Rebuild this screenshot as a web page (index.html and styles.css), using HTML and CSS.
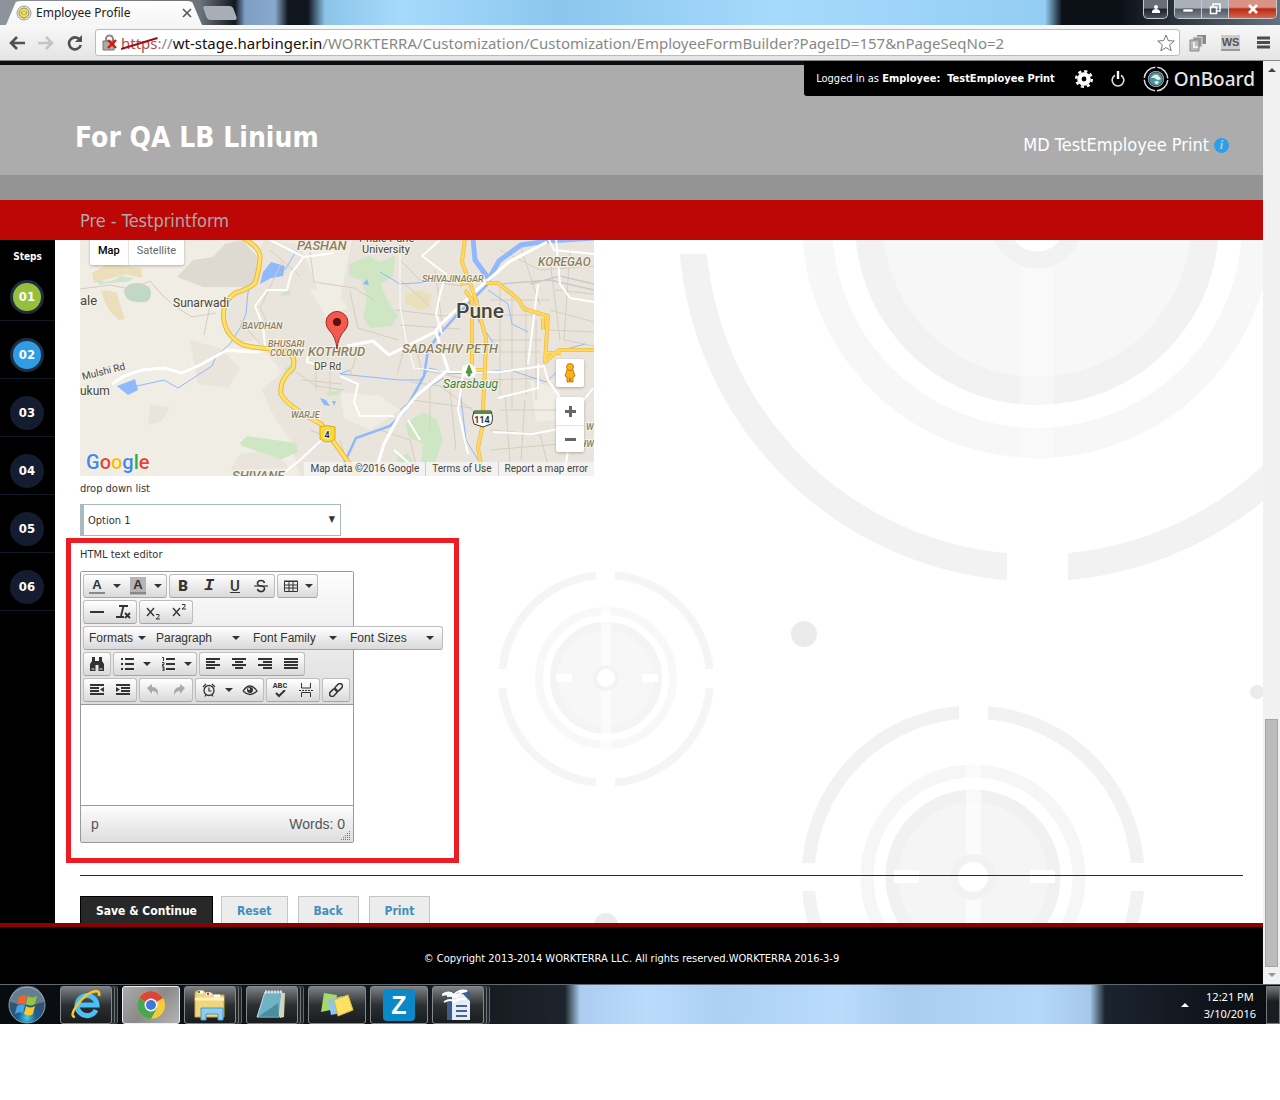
FILE: index.html
```html
<!DOCTYPE html>
<html lang="en">

<head>
	<meta charset="UTF-8" />
	<title>Employee Profile</title>
	<link rel="stylesheet" href="styles.css">
</head>

<body>
	<!-- Window title bar -->
	<div class="titlebar">
		<div class="tab">
			<svg width="16" height="16" viewBox="0 0 16 16"><circle cx="8" cy="8" r="7" fill="#eee" stroke="#999"/><circle cx="8" cy="8" r="5" fill="#f3e21c" stroke="#888"/><path d="M5 8q3-3 6 0q-3 3-6 0" fill="#fff" stroke="#a98"/></svg>
			<span class="tab-title">Employee Profile</span>
			<button class="tab-close" aria-label="Close tab"><svg width="10" height="10" viewBox="0 0 10 10"><path d="M1 1l8 8M9 1l-8 8" stroke="#555" stroke-width="1.6"/></svg></button>
		</div>
		<button class="new-tab" aria-label="New tab"></button>
		<div class="window-buttons">
			<button class="win user" aria-label="User"><svg width="10" height="10" viewBox="0 0 10 10"><circle cx="5" cy="3" r="2" fill="#fff"/><path d="M1 9V7q1-2 4-2t4 2v2z" fill="#fff"/></svg></button>
			<div class="win-group">
				<button class="win" aria-label="Minimize"><svg width="12" height="12" viewBox="0 0 12 12"><path d="M1 6h10v3H1z" fill="#fff" stroke="#555" stroke-width=".6"/></svg></button>
				<button class="win" aria-label="Restore"><svg width="12" height="12" viewBox="0 0 12 12"><path d="M4 4V1h7v7H8M1.500 4h6v6.500h-6z" fill="none" stroke="#fff" stroke-width="1.500"/></svg></button>
				<button class="win close" aria-label="Close"><svg width="12" height="12" viewBox="0 0 12 12"><path d="M2 2l8 8M10 2l-8 8" stroke="#fff" stroke-width="2.600"/></svg></button>
			</div>
		</div>
	</div>

	<!-- Browser toolbar -->
	<div class="browser-bar">
		<button class="nav" aria-label="Back"><svg width="18" height="16" viewBox="0 0 18 16"><path d="M17 8H3M9 2L3 8l6 6" fill="none" stroke="#505050" stroke-width="2.600"/></svg></button>
		<button class="nav" aria-label="Forward"><svg width="18" height="16" viewBox="0 0 18 16"><path d="M1 8h14M9 2l6 6-6 6" fill="none" stroke="#c4c4c4" stroke-width="2.600"/></svg></button>
		<button class="nav" aria-label="Reload"><svg width="16" height="16" viewBox="0 0 16 16"><path d="M13 5a6 6 0 1 0 .8 5" fill="none" stroke="#505050" stroke-width="2.600"/><path d="M15 0v7H8z" fill="#505050"/></svg></button>
		<div class="address">
			<svg width="16" height="18" viewBox="0 0 16 18"><path d="M4 8V5a3.500 3.500 0 0 1 7 0v3" fill="none" stroke="#888" stroke-width="2"/><path d="M1 7h11v9H1z" fill="#aaa" stroke="#777"/><path d="M6 6l8 8M14 6l-8 8" stroke="#d9160c" stroke-width="2.400"/></svg>
			<div class="url" role="textbox" aria-label="Address"><span class="scheme">https<svg viewBox="0 0 36 14" preserveAspectRatio="none"><path d="M0 12L36 1" stroke="#a30d0d" stroke-width="2"/></svg></span>://<span class="host">wt-stage.harbinger.in</span>/WORKTERRA/Customization/Customization/EmployeeFormBuilder?PageID=157&amp;nPageSeqNo=2</div>
			<svg width="18" height="18" viewBox="0 0 18 18"><path d="M9 1l2.300 5.600 6 .4-4.700 3.800 1.600 6L9 13.500l-5.200 3.300 1.600-6L.7 7l6-.4z" fill="#fff" stroke="#777"/></svg>
		</div>
		<button class="ext" aria-label="Copy pages"><svg width="18" height="18" viewBox="0 0 18 18"><path d="M8 1h9v9H8z" fill="#888"/><path d="M4 3h9v10H4z" fill="#999" stroke="#ddd"/><path d="M1 6h9v11H1z" fill="#bbb" stroke="#888"/><path d="M5 8v5h4" fill="none" stroke="#eee" stroke-width="2"/></svg></button>
		<button class="ext ws">WS</button>
		<button class="ext" aria-label="Menu"><svg width="13" height="13" viewBox="0 0 13 13"><path d="M0 2h13M0 6.500h13M0 11h13" stroke="#4c4c4c" stroke-width="3"/></svg></button>
	</div>

	<div class="viewport">
		<div class="page">
			<header class="header">
				<div class="user-bar">
					<span class="logged">Logged in as <b>Employee:&nbsp; TestEmployee Print</b></span>
					<button aria-label="Settings"><svg width="18" height="18" viewBox="0 0 18 18"><circle cx="9" cy="9" r="4.600" fill="none" stroke="#fff" stroke-width="4.400"/><circle cx="9" cy="9" r="7.800" fill="none" stroke="#fff" stroke-width="2.400" stroke-dasharray="3.100 3.026"/></svg></button>
					<button aria-label="Log out"><svg width="14" height="16" viewBox="0 0 14 16"><path d="M4 4.200a5.800 5.800 0 1 0 6 0" fill="none" stroke="#ddd" stroke-width="1.600"/><path d="M7 0v8" stroke="#fff" stroke-width="2.400"/></svg></button>
					<a href="#" class="brand">
						<svg width="26" height="26" viewBox="0 0 26 26"><circle cx="13" cy="13" r="11.800" fill="none" stroke="#ddd" stroke-width="1.500" stroke-dasharray="16.500 2.035" stroke-dashoffset="-1"/><circle cx="13" cy="13" r="8" fill="#ddd"/><circle cx="13" cy="13" r="7" fill="#4d91a8" stroke="#345"/><path d="M8 12q3-5 7-3l3 4q-3 2-5 0t-5-1M11 16q3-2 5 0l-2 3z" fill="#e5f1cf"/></svg>
						<span>OnBoard</span>
					</a>
				</div>
				<div class="title-row">
					<h1>For QA LB Linium</h1>
					<div class="person">MD TestEmployee Print <span class="info">i</span></div>
				</div>
			</header>
			<h2 class="form-title">Pre - Testprintform</h2>

			<div class="columns">
				<nav class="steps">
					<span class="steps-title">Steps</span>
					<a href="#" class="step done"><span>01</span></a>
					<a href="#" class="step current"><span>02</span></a>
					<a href="#" class="step"><span>03</span></a>
					<a href="#" class="step"><span>04</span></a>
					<a href="#" class="step"><span>05</span></a>
					<a href="#" class="step"><span>06</span></a>
				</nav>

				<main class="main">
					<svg class="backdrop" viewBox="55 240 1208 683" preserveAspectRatio="xMaxYMin slice">
						<!-- large target -->
						<circle cx="1037" cy="223" r="345" fill="none" stroke="#f2f2f2" stroke-width="27"/>
						<path d="M1007 540h61v50h-61zM670 220h60v34h-60z" fill="#fff"/>
						<circle cx="1037" cy="223" r="220" fill="none" stroke="#f7f7f7" stroke-width="30"/>
						<circle cx="1037" cy="223" r="182" fill="#f2f2f2"/>
						<circle cx="1037" cy="223" r="154" fill="#f7f7f7"/>
						<path d="M1020 240h34v217h-34z" fill="#fff" opacity=".3"/>
						<circle cx="1037" cy="223" r="37" fill="#fff" stroke="#f2f2f2" stroke-width="17"/>
						<!-- small target -->
						<circle cx="606" cy="679" r="104" fill="none" stroke="#f5f5f5" stroke-width="8"/>
						<path d="M596 565h19v20h-19zM596 773h19v20h-19zM495 669h20v19h-20zM697 669h20v19h-20z" fill="#fff"/>
						<circle cx="606" cy="678" r="67" fill="none" stroke="#f8f8f8" stroke-width="8"/>
						<circle cx="606" cy="678" r="52" fill="#f7f7f7" stroke="#f4f4f4" stroke-width="8"/>
						<path d="M601 607h10v142h-10z" fill="#fff" opacity=".5"/>
						<path d="M556 674h16v8h-16zM642 674h16v8h-16z" fill="#fff"/>
						<circle cx="606" cy="678" r="11" fill="#fff" stroke="#f3f3f3" stroke-width="4"/>
						<!-- medium target -->
						<circle cx="973" cy="877" r="165" fill="none" stroke="#f2f2f2" stroke-width="13"/>
						<path d="M959 700h29v30h-29zM795 863h30v28h-30zM1122 863h30v28h-30z" fill="#fff"/>
						<circle cx="973" cy="877" r="106" fill="none" stroke="#f6f6f6" stroke-width="13"/>
						<circle cx="973" cy="877" r="81" fill="#f5f5f5" stroke="#f1f1f1" stroke-width="13"/>
						<path d="M966 764h15v160h-15z" fill="#fff" opacity=".55"/>
						<path d="M894 870h25v13h-25zM1030 870h25v13h-25z" fill="#fff"/>
						<circle cx="973" cy="877" r="19" fill="#fff" stroke="#f2f2f2" stroke-width="8"/>
						<g fill="#ebebeb"><circle cx="804" cy="634" r="13"/><circle cx="1257" cy="692" r="7"/><circle cx="606" cy="925" r="12"/></g>
					</svg>

					<div class="map">
						<svg class="map-art" viewBox="80 240 514 236" preserveAspectRatio="xMinYMin slice">
							<rect x="80" y="240" width="514" height="236" fill="#f0ede5"/>
							<!-- built-up areas -->
							<path d="M264 240L300 244 318 290 340 300 352 240H594V476H300L290 440 270 410 262 390 282 372 256 340 232 344 226 310 240 290z" fill="#e9e5dc"/>
							<path d="M190 340l30 8 20 20-12 20-30-4zM150 405l20 2-8 14-14 4zM250 330l20-20 10 30zM230 470l60-2-20-18-30 4z" fill="#e9e5dc"/>
							<path d="M310 290l24-2 14 20-22 8zM340 392l40 4 20 14-30 20-26-12zM530 380l30 10-4 30-20 2z" fill="#f0ede5"/>
							<path d="M177 277l16-17 20-3 12-13 17-4 15 16-2 31-52 0z" fill="#dedad2"/>
							<path d="M92 273l16-9 33 4 1 10-16-4-32 9zM101 290l15 2 9 27-6 1q-14-10-18-30z" fill="#ebdfbb"/>
							<path d="M404 296l14-6 14 4-4 14-8 2-14-6z" fill="#ebdfbb"/>
							<path d="M96 280q16 4 24-4l14 2-6 4q-16 0-28 3z" fill="#cfe6ce"/>
							<path d="M124 290q4-8 15-7 12 2 12 10 0 11-12 9-15 0-15-12z" fill="#c0d8c5"/>
							<path d="M349 264l20-8 10 6 16-6-2 20-12 8 5 14 12 18-6 10-22 2-7-10 4-20-6-18-12-4zM240 443l7-7 49 7 2 9-18 8-8-4-30-10zM405 424l18-12 14 8 6 20-8 22-14 2 2-20-14-6zM284 369l8-6 5 4-4 8zM325 393l16-3v4l-12 2zM280 294l10-4v5l-8 1zM396 458l12-5 6 11-14 2z" fill="#cfe6c5"/>
							<path d="M263 272l8-10 14 4-2 10-12 2-11 6zM117 386l18-7 3 11-10 5zM320 398l6 2 4 6-6-1zM332 401l4 0-2 5zM363 284l4-5 2 6z" fill="#90b8ff"/>
							<!-- side streets -->
							<path d="M80 289l30-4 20 4 20-8 12 14 14 12 16 10 24-4M270 250l30 26M282 262l-22 46 10 20M310 252l4 30 40 6 20 12M350 292l8 36 40 12M296 372l20 14 28 4M316 366v24M330 366v26M302 380l40 4M400 260l20 20 42 6M400 280l30 26M395 310l50 6 30-4M400 325l60 4M415 340l6 30 50 10M410 382l30 4 40 30M430 380v50M412 400l60 8M450 390l6 60M490 300h60M490 315h54M490 340h52M490 352h50M500 285v110M512 290v120M526 305v90M536 320v80M490 380l50-2M490 430l50 4 10 40M505 395l6 80M525 400l-4 60M490 450l70-6M550 260l10 80M570 250l-6 90 30 6M555 290l39 4M550 310l44 12M548 330l46 2M380 430l30 10 8 34M340 440l10 32M310 430l20 8M435 270l8 60M500 250l40 20 54-4M520 245l20 60M240 320l20 24M210 305l-6 30M500 410h60M360 345l-10 30M405 345l-8 30" fill="none" stroke="#d6cdbf" stroke-width="1"/>
							<path d="M500 284l50-4 44 10M530 284l30-8 34 8" fill="none" stroke="#c9c9c9" stroke-width="1.500"/>
							<!-- creeks and river -->
							<path d="M258 272l-10 20-2 22-6 14-10 16-14 12-4 10-34 22-14-8-36 8M297 250l-12 20M350 370l-10 4 60 6h20l10-12 20 6 60-4 36 12 22-20M380 272l20 12 30-2M488 290l20 14 4 20 16 8M478 300v20l20 30M460 390l6 50 12 20M400 410l24-20 20-12M555 352l30-8" fill="none" stroke="#90b8ff" stroke-width="1"/>
							<path d="M473 238l1 18 8 16 8 10-14 14-20 20-18 20-10 14-4 26-20 36-14 14-34 12-16 34" fill="none" stroke="#90b8ff" stroke-width="2.500"/>
							<path d="M473 238l2 22 14 19 10-18 22-16 26-4 47-3" fill="none" stroke="#90b8ff" stroke-width="5"/>
							<!-- main roads -->
							<g fill="none" stroke="#fff" stroke-linejoin="round">
								<path d="M112 384l12-8 18-6 22-2 18 5 18-8 27-15 24 2 18-2 26 2M347 346l26-5 16 14 46-23 6-8 40-38 28-24 38-20M436 332l12 38-32 26-18 22-14 26-10 32" stroke-width="3"/>
								<path d="M440 240l-18 16 24 18-6 20-4 20 6 20M266 238l30 15 8 4 30-4M303 258l-12 16-4 16-20 0-12 16 8 20 2 20M309 350l-2 12 14 4M340 376l18 8-4 18 6 14 34 0M448 372l50 0 46-6 4 14 18 26 6 18-8 52M493 432l40 2 30-6 30-40M594 254l-40-4-6-12M594 302l-24-4-10-14-4-46M538 284l-10 80M420 440l-12-20M394 450l14 12 4 14M464 366l-6 44 10 44M280 476l20-16 28-26M538 364v24l-40 10" stroke-width="2"/>
								<path d="M400 252v54l6 34 8 28 34 4" stroke-width="1"/>
							</g>
							<!-- highways -->
							<g fill="none" stroke-linejoin="round">
								<path d="M243 238q18 10 17 20-1 14-5 25-6 6-20 10-16 12-10 32 3 12 18 20 18 4 40 5 14 4 10 18-14 12-12 26 6 12 40 30l40 56" stroke="#e8b946" stroke-width="5"/>
								<path d="M243 238q18 10 17 20-1 14-5 25-6 6-20 10-16 12-10 32 3 12 18 20 18 4 40 5 14 4 10 18-14 12-12 26 6 12 40 30l40 56" stroke="#ffe168" stroke-width="3"/>
								<path d="M465 238l-3 24 6 16 8 22 6 24 4 14-1 30-3 60-4 20 5 28M465 290l7 10v70h14M460 284l10-2M486 283l12 0 20 16 6 10 24 7-2 30-1 16 14-12 35 0M543 318v12M545 353h16" stroke="#f0bd45" stroke-width="4"/>
								<path d="M465 238l-3 24 6 16 8 22 6 24 4 14-1 30-3 60-4 20 5 28M465 290l7 10v70h14M460 284l10-2M486 283l12 0 20 16 6 10 24 7-2 30-1 16 14-12 35 0M543 318v12M545 353h16" stroke="#ffd95f" stroke-width="2.500"/>
							</g>
							<!-- place names -->
							<g class="place">
								<text x="80" y="305" font-size="13">ale</text>
								<text x="173" y="307" font-size="12">Sunarwadi</text>
								<text x="80" y="395" font-size="12">ukum</text>
								<text x="456" y="318" font-size="21" font-weight="500">Pune</text>
								<text x="359" y="242" font-size="11">Phule Pune</text>
								<text x="362" y="253" font-size="11">University</text>
								<text x="314" y="370" font-size="10">DP Rd</text>
								<text x="83" y="380" font-size="10" transform="rotate(-14 83 380)">Mulshi Rd</text>
							</g>
							<g class="area">
								<text x="297" y="250" font-size="13">PASHAN</text>
								<text x="538" y="266" font-size="12">KOREGAO</text>
								<text x="422" y="282" font-size="9">SHIVAJINAGAR</text>
								<text x="242" y="329" font-size="9">BAVDHAN</text>
								<text x="268" y="347" font-size="9">BHUSARI</text>
								<text x="270" y="356" font-size="9">COLONY</text>
								<text x="308" y="356" font-size="13">KOTHRUD</text>
								<text x="402" y="353" font-size="13">SADASHIV PETH</text>
								<text x="291" y="418" font-size="9">WARJE</text>
								<text x="232" y="480" font-size="13">SHIVANE</text>
								<text x="586" y="430" font-size="9">W</text>
								<text x="580" y="447" font-size="9">HW</text>
							</g>
							<circle cx="469" cy="371" r="7" fill="#fff"/><path d="M469 365l-3 8h2v3h2v-3h2z" fill="#4c9a3c" stroke="#4c9a3c"/>
							<text x="443" y="388" class="park">Sarasbaug</text>
							<!-- road shields -->
							<path d="M320 427q7-3 15 0v12q-7 6-15 0z" fill="#fcd834" stroke="#d6ab1f"/><text x="327" y="438" class="shield" text-anchor="middle">4</text>
							<path d="M474 411h17q3 8 0 13l-8 3-9-3q-3-6 0-13z" fill="#fff" stroke="#333"/><path d="M474 411h17v3h-17z" fill="#528f3c"/><text x="482" y="423" class="shield" text-anchor="middle">114</text>
							<!-- marker -->
							<path d="M337 349q-1-12-8-19a11 11 0 1 1 16 0q-7 7-8 19z" fill="#f4594e" stroke="#a32c24"/><circle cx="337" cy="322" r="4" fill="#5b110d"/>
						</svg>
						<div class="map-type">
							<button class="on">Map</button>
							<button>Satellite</button>
						</div>
						<div class="map-tools">
							<button class="pegman" aria-label="Street View"><svg width="14" height="20" viewBox="0 0 14 20"><path d="M4 7h6l2 6-2 1v5H7.500v-4h-1v4H4v-5l-2-1z" fill="#fbb117" stroke="#c57f12"/><circle cx="7" cy="4" r="3.500" fill="#fbb117" stroke="#c57f12"/></svg></button>
							<div class="zoom">
								<button aria-label="Zoom in"><svg width="11" height="11" viewBox="0 0 11 11"><path d="M5.500 0v11M0 5.500h11" stroke="#666" stroke-width="3"/></svg></button>
								<button aria-label="Zoom out"><svg width="11" height="11" viewBox="0 0 11 11"><path d="M0 5.500h11" stroke="#666" stroke-width="3"/></svg></button>
							</div>
						</div>
						<div class="google"><span class="b">G</span><span class="r">o</span><span class="y">o</span><span class="b">g</span><span class="g">l</span><span class="r">e</span></div>
						<div class="map-legal"><span>Map data ©2016 Google</span><a href="#">Terms of Use</a><a href="#">Report a map error</a></div>
					</div>

					<label class="field-label" for="options">drop down list</label>
					<div class="select-wrap">
						<select id="options"><option>Option 1</option></select>
					</div>

					<section class="highlight">
						<label class="field-label" for="editor">HTML text editor</label>
						<div class="editor">
							<div class="toolbar">
								<div class="row">
									<div class="group">
										<button class="ic letter" aria-label="Text color">A</button><button class="caret" aria-label="More"></button>
										<button class="ic letter shaded" aria-label="Background color">A</button><button class="caret" aria-label="More"></button>
									</div>
									<div class="group">
										<button class="ic big" aria-label="Bold"><b>B</b></button>
										<button class="ic big serif" aria-label="Italic"><i>I</i></button>
										<button class="ic big" aria-label="Underline"><u>U</u></button>
										<button class="ic big" aria-label="Strikethrough"><svg width="14" height="14" viewBox="0 0 14 14"><path d="M10.500 4Q10 1.500 7 1.500T3.500 4 7 7t3.500 3T7 12.500 3.500 10" fill="none" stroke="#333" stroke-width="1.600"/><path d="M0 7h14" stroke="#333" stroke-width="1.200"/></svg></button>
									</div>
									<div class="group">
										<button class="ic" aria-label="Table"><svg width="14" height="12" viewBox="0 0 14 12"><path d="M.5 1.500h13v10H.5zM0 1h14M0 5h14M0 8h14M5 1v10M9 1v10" fill="none" stroke="#333"/></svg></button><button class="caret narrow" aria-label="More"></button>
									</div>
								</div>
								<div class="row">
									<div class="group">
										<button class="ic" aria-label="Horizontal line"><svg width="14" height="14" viewBox="0 0 14 14"><path d="M0 7h14" stroke="#333" stroke-width="2"/></svg></button>
										<button class="ic" aria-label="Clear formatting"><svg width="16" height="16" viewBox="0 0 16 16"><path d="M4 2h9M8.500 2L6 12M1 13h8M10 9l5 5M15 9l-5 5" fill="none" stroke="#333" stroke-width="1.900"/></svg></button>
									</div>
									<div class="group">
										<button class="ic" aria-label="Subscript"><svg width="16" height="16" viewBox="0 0 16 16"><path d="M2 4l7 8M9 4l-7 8" fill="none" stroke="#333" stroke-width="1.400"/><path d="M11 10.500h3v2l-3 2.500h4" fill="none" stroke="#333"/></svg></button>
										<button class="ic" aria-label="Superscript"><svg width="16" height="16" viewBox="0 0 16 16"><path d="M2 4l7 8M9 4l-7 8" fill="none" stroke="#333" stroke-width="1.400"/><path d="M11 .5h3v2L11 5h4" fill="none" stroke="#333"/></svg></button>
									</div>
								</div>
								<div class="row">
									<div class="group">
										<button class="menu short">Formats<i class="tri"></i></button>
										<button class="menu">Paragraph<i class="tri"></i></button>
										<button class="menu">Font Family<i class="tri"></i></button>
										<button class="menu">Font Sizes<i class="tri"></i></button>
									</div>
								</div>
								<div class="row">
									<div class="group">
										<button class="ic" aria-label="Find"><svg width="14" height="14" viewBox="0 0 14 14"><path d="M2 0h3v4h4V0h3v4l2 3v7H8.500V8h-3v6H0V7l2-3z" fill="#333"/><path d="M1.500 12h3M9.500 12h3" stroke="#eee"/></svg></button>
									</div>
									<div class="group">
										<button class="ic" aria-label="Bullet list"><svg width="14" height="14" viewBox="0 0 14 14"><path d="M5 2h9M5 7h9M5 12h9" stroke="#333" stroke-width="2"/><path d="M1 2h2M1 7h2M1 12h2" stroke="#333" stroke-width="2"/></svg></button><button class="caret" aria-label="More"></button>
										<button class="ic" aria-label="Numbered list"><svg width="14" height="14" viewBox="0 0 14 14"><path d="M5 2h9M5 7h9M5 12h9" stroke="#333" stroke-width="2"/><path d="M1 .5h1.500v3.500M1 5.500h2v2H1.500v1.500H3M1 10h2v4H1M1.500 12H3" fill="none" stroke="#333"/></svg></button><button class="caret" aria-label="More"></button>
									</div>
									<div class="group">
										<button class="ic" aria-label="Align left"><svg width="14" height="12" viewBox="0 0 14 12"><path d="M0 1h14M0 4h9M0 7h14M0 10h9" stroke="#333" stroke-width="2"/></svg></button>
										<button class="ic" aria-label="Align center"><svg width="14" height="12" viewBox="0 0 14 12"><path d="M0 1h14M3 4h8M0 7h14M3 10h8" stroke="#333" stroke-width="2"/></svg></button>
										<button class="ic" aria-label="Align right"><svg width="14" height="12" viewBox="0 0 14 12"><path d="M0 1h14M5 4h9M0 7h14M5 10h9" stroke="#333" stroke-width="2"/></svg></button>
										<button class="ic" aria-label="Justify"><svg width="14" height="12" viewBox="0 0 14 12"><path d="M0 1h14M0 4h14M0 7h14M0 10h14" stroke="#333" stroke-width="2"/></svg></button>
									</div>
								</div>
								<div class="row">
									<div class="group">
										<button class="ic" aria-label="Outdent"><svg width="14" height="12" viewBox="0 0 14 12"><path d="M0 1h14M0 4h9M0 7h9M0 10h14" stroke="#333" stroke-width="2"/><path d="M14 3v5l-4-2.500z" fill="#333"/></svg></button>
										<button class="ic" aria-label="Indent"><svg width="14" height="12" viewBox="0 0 14 12"><path d="M0 1h14M5 4h9M5 7h9M0 10h14" stroke="#333" stroke-width="2"/><path d="M0 3v5l4-2.500z" fill="#333"/></svg></button>
									</div>
									<div class="group">
										<button class="ic" aria-label="Undo"><svg width="14" height="14" viewBox="0 0 14 14"><path d="M1 5l5-4v3q7 0 6 9-1-5-6-5v3z" fill="#aaa"/></svg></button>
										<button class="ic" aria-label="Redo"><svg width="14" height="14" viewBox="0 0 14 14"><path d="M13 5L8 1v3q-7 0-6 9 1-5 6-5v3z" fill="#aaa"/></svg></button>
									</div>
									<div class="group">
										<button class="ic" aria-label="Insert date"><svg width="14" height="14" viewBox="0 0 14 14"><circle cx="7" cy="7.500" r="5" fill="none" stroke="#333" stroke-width="1.300"/><path d="M7 4.500V8h2.500M1 4l3-3M13 4l-3-3M3 13.500l1-2M11 13.500l-1-2" fill="none" stroke="#333" stroke-width="1.200"/></svg></button><button class="caret" aria-label="More"></button>
										<button class="ic" aria-label="Preview"><svg width="16" height="12" viewBox="0 0 16 12"><path d="M1 7q7-10 14 0-7 7-14 0" fill="none" stroke="#333" stroke-width="1.300"/><circle cx="8" cy="6" r="3" fill="#333"/><circle cx="7" cy="5" r="1" fill="#fff"/></svg></button>
									</div>
									<div class="group">
										<button class="ic spell" aria-label="Spellcheck">ABC<svg width="12" height="8" viewBox="0 0 12 8"><path d="M2 3l3 3 6-6" fill="none" stroke="#333" stroke-width="2"/></svg></button>
										<button class="ic" aria-label="Page break"><svg width="14" height="14" viewBox="0 0 14 14"><path d="M2.500 0v5h9V0M2.500 14V9.500h9V14" fill="none" stroke="#333"/><path d="M0 7.500h14" stroke="#333" stroke-dasharray="2 1"/></svg></button>
									</div>
									<div class="group">
										<button class="ic" aria-label="Insert link"><svg width="14" height="14" viewBox="0 0 14 14"><g fill="none" stroke="#333" stroke-width="1.500" transform="rotate(-45 7 7)"><rect x="-1" y="4.500" width="8.500" height="5" rx="2.500"/><rect x="6.500" y="4.500" width="8.500" height="5" rx="2.500"/></g></svg></button>
									</div>
								</div>
							</div>
							<textarea id="editor"></textarea>
							<div class="statusbar">
								<span>p</span><span>Words: 0</span>
								<svg class="grip" width="10" height="10" viewBox="0 0 10 10"><path d="M8 .5h2M6 2.500h4M4 4.500h6M2 6.500h8M0 8.500h10" stroke="#777" stroke-dasharray="1 1"/></svg>
							</div>
						</div>
					</section>

					<hr>
					<div class="actions">
						<button class="primary">Save &amp; Continue</button>
						<button>Reset</button>
						<button>Back</button>
						<button>Print</button>
					</div>
				</main>
			</div>
			<footer class="footer">© Copyright 2013-2014 WORKTERRA LLC. All rights reserved.WORKTERRA 2016-3-9</footer>
		</div>
		<div class="scrollbar"><i class="up"></i><div class="thumb"></div><i class="down"></i></div>
	</div>

	<!-- Taskbar -->
	<div class="taskbar">
		<button class="start" aria-label="Start"><svg width="38" height="38" viewBox="0 0 38 38"><defs><radialGradient id="orb" cy=".85"><stop offset="0" stop-color="#3fd0ee"/><stop offset=".5" stop-color="#1c5e94"/><stop offset="1" stop-color="#33536c"/></radialGradient></defs><circle cx="19" cy="19" r="18" fill="url(#orb)" stroke="#8aa3b3"/><path d="M2 16a17 17 0 0 1 34 0q-17 6-34 0" fill="#fff" opacity=".25"/><path d="M11 11q4-3 8-1l-2 8q-4-2-8 1z" fill="#f0642a"/><path d="M20 10q4 3 9 0l-2 8q-4 3-9 0z" fill="#93c73d"/><path d="M9 20q4-3 8-1l-2 8q-4-2-8 1z" fill="#46a5e8"/><path d="M18 20q4 3 9 0l-2 8q-4 3-9 0z" fill="#fbc926"/></svg></button>
		<div class="tasks">
			<button class="task stack" aria-label="Internet Explorer"><svg width="32" height="32" viewBox="0 0 32 32"><path d="M26 21a10 10 0 1 1 1-5H9" fill="none" stroke="#4cc0f5" stroke-width="5"/><path d="M5 28Q-1 27 8 15T26 2q4 0 3 5" fill="none" stroke="#f8c62d" stroke-width="2.500"/></svg></button>
			<button class="task active" aria-label="Chrome"><svg width="30" height="30" viewBox="0 0 30 30"><circle cx="15" cy="15" r="14" fill="#f7cb3b"/><path d="M15 15L2.900 8a14 14 0 0 1 24.200 0z" fill="#d9473a"/><path d="M15 15L2.900 8A14 14 0 0 0 15 29l6-11z" fill="#4aa652"/><circle cx="15" cy="15" r="6.500" fill="#fff"/><circle cx="15" cy="15" r="5" fill="#3f78dc"/></svg></button>
			<button class="task stack" aria-label="Explorer"><svg width="34" height="32" viewBox="0 0 34 32"><path d="M2 4l1-2h8l2 2h6l2 2h10v22H2z" fill="#efd57c" stroke="#c9a648"/><path d="M5 3h5M13 5h5M21 7h6" stroke="#fff" stroke-width="3"/><path d="M5 3h2" stroke="#35a345" stroke-width="2"/><path d="M14 5h2" stroke="#d33" stroke-width="2"/><path d="M2 10h29" stroke="#fff3bb" stroke-width="3"/><path d="M8 31V19h22v12h-5v-6H13v6z" fill="#8ecdf0" stroke="#4c96c8"/></svg></button>
			<button class="task stack" aria-label="Notepad"><svg width="32" height="32" viewBox="0 0 32 32"><path d="M10 4h19l-1 24-4 1z" fill="#d9d3b0"/><path d="M9 3h17l-3 25H1z" fill="#6fb3c4" stroke="#bfe0e8"/><path d="M9 3h17" stroke="#ddd" stroke-width="3" stroke-dasharray="2 1"/><path d="M2 28l20-14 1 14z" fill="#2f7488" opacity=".6"/></svg></button>
			<button class="task" aria-label="Sticky Notes"><svg width="34" height="30" viewBox="0 0 34 30"><path d="M4 3l13 2-2 14-14 3z" fill="#a6d96a"/><path d="M8 10l14-4 4 16-15 3z" fill="#8cc4f5"/><path d="M14 10l14-5 5 15-15 6z" fill="#fbe262" stroke="#d8b93a"/></svg></button>
			<button class="task" aria-label="Zoho"><span class="z">Z</span></button>
			<button class="task stack" aria-label="Writer"><svg width="32" height="32" viewBox="0 0 32 32"><path d="M5 5h16l7 7v19H5z" fill="#e6edf4"/><path d="M5 8h5v23H5zM20 3l8 0v9z" fill="#3d5d8a"/><path d="M14 17h11M14 22h11M14 27h11" stroke="#44658f" stroke-width="2"/><path d="M0 6q7-5 12 0 5-6 13-4-8 1-11 6-7-4-14-2M2 13q7-4 11 0 4-4 11-3" fill="none" stroke="#fff" stroke-width="2"/></svg></button>
		</div>
		<i class="tray"></i>
		<div class="clock">12:21 PM<br>3/10/2016</div>
		<button class="desktop" aria-label="Show desktop"></button>
	</div>
</body>

</html>
```
FILE: styles.css
```css
* { box-sizing: border-box; }

body {
	margin: 0; background: #fff; color: #333;
	font-family: "DejaVu Sans Condensed", Tahoma, sans-serif; font-size: 11px;
}

button {
	margin: 0; padding: 0; border: 0; background: none; color: inherit;
	font: inherit; display: flex; align-items: center; justify-content: center;
}
svg { display: block; flex: none; }
a { color: inherit; text-decoration: none; }

/* Window title bar */
.titlebar {
	display: flex; height: 25px; padding-left: 6px; overflow: hidden;
	background: linear-gradient(90deg, #8e949c 0, #6d737b 200px, #111820 235px, #7f9ec4 245px, #8aa9cf 275px, #10161e 288px, #10161e 308px, #8cc4e8 325px, #a5dafb 400px, #8cc6ee 560px, #a5dafb 780px, #94cdf3 1045px, #0c1118 1062px, #0c1118 1120px, #68727e 1280px);
}
.tab {
	display: flex; align-items: center; gap: 4px; width: 196px; padding: 0 10px;
	background: linear-gradient(#fff, #f5f5f5); clip-path: polygon(5% 8%, 7% 4%, 93% 4%, 95% 8%, 100% 100%, 0 100%);
}
.tab-title { flex: 1; font: 12px/24px "Noto Sans", "Segoe UI", sans-serif; color: #222; }
.new-tab {
	width: 30px; height: 14px; margin: 6px 0 0 3px; background: #a8adb6;
	border-radius: 3px; transform: skewX(20deg);
}
.window-buttons { display: flex; gap: 6px; margin-left: auto; padding-right: 3px; height: 19px; }
.win-group { display: flex; border: 1px solid #c5cad0; border-top: 0; border-radius: 0 0 5px 5px; overflow: hidden; }
.win { width: 27px; background: linear-gradient(#a9b0b8 45%, #4f5863 50%, #7c8792); border-right: 1px solid #c5cad0; }
.win.user { width: 25px; border: 1px solid #c5cad0; border-top: 0; border-radius: 0 0 5px 5px; background: linear-gradient(#686e76 45%, #1d2229 50%, #4d545d); }
.win.close { width: 47px; border: 0; background: linear-gradient(#d99384 40%, #b92a11 50%, #d8664c); }

/* Browser toolbar */
.browser-bar {
	display: flex; align-items: center; height: 36px; padding: 0 8px;
	background: linear-gradient(#f8f8f8, #e4e4e4); border-bottom: 1px solid #888;
}
.nav { width: 18px; margin-right: 11px; }
.address {
	flex: 1; display: flex; align-items: center; gap: 3px; min-width: 0; height: 27px;
	padding: 0 4px 0 6px; background: #fff; border: 1px solid #bbb; border-radius: 3px;
}
.url {
	flex: 1; overflow: hidden; white-space: nowrap; color: #888;
	font: 15px/24px "Noto Sans", "Segoe UI", sans-serif;
}
.url .host { color: #111; }
.scheme { position: relative; color: #b34a4a; }
.scheme svg { position: absolute; left: 0; top: 4px; width: 100%; height: 14px; }
.ext { width: 18px; margin-left: 9px; }
.ext + .ext { margin-left: 14px; }
.ext.ws { width: 19px; height: 16px; background: #ccc; border-bottom: 2px solid #999; font: bold 11px "Liberation Sans", sans-serif; color: #555; }

/* Page inside the browser */
.viewport { display: flex; border-top: 4px solid #0a0f14; }
.page { flex: 1; min-width: 0; }
.header { display: flow-root; height: 135px; border-bottom: 25px solid #949494; background: #acacac; }
.user-bar {
	display: flex; align-items: center; width: fit-content; height: 35px;
	margin: -4px 0 0 auto; padding: 0 8px 0 12px;
	background: #000; color: #fff; border-radius: 0 0 0 3px;
}
.logged { margin-right: 20px; }
.user-bar button { margin-right: 18px; }
.brand { display: flex; align-items: center; gap: 5px; font: 500 19px/30px "Noto Sans", sans-serif; color: #e4e4e4; }
.title-row { display: flex; justify-content: space-between; align-items: center; padding: 24px 34px 0 75px; color: #fff; }
h1 { margin: 0; font-size: 28px; line-height: 36px; }
.person { display: flex; align-items: center; gap: 5px; padding-top: 14px; font-size: 18px; line-height: 22px; }
.info {
	width: 15px; height: 15px; border-radius: 50%; background: #2d9fe8;
	font: italic bold 12px/15px "Liberation Serif", serif; text-align: center; color: #b9c9d4;
}
.form-title {
	margin: 0; padding: 2px 0 0 80px; background: #bd0606; color: #aaa;
	font-size: 18px; font-weight: normal; line-height: 38px;
}

.columns { display: flex; }
.steps { width: 55px; background: #000; color: #fff; font-weight: bold; text-align: center; }
.steps-title { display: block; height: 23px; padding-top: 10px; font-size: 10px; line-height: 14px; }
.step { display: block; height: 58px; padding: 17px 0 0 10px; border-bottom: 1px solid #0e1a29; font-size: 13px; }
.step span { display: block; width: 34px; height: 34px; border: 3px solid #141c30; border-radius: 50%; background: #141c30; line-height: 28px; }
.step.done span { background: #96bf3d; border-color: #1f2d3f; }
.step.current span { background: #2f9ce6; border-color: #1f2d3f; }

.main { position: relative; flex: 1; min-width: 0; height: 683px; overflow: hidden; padding: 0 20px 0 25px; }
.backdrop { position: absolute; inset: 0; width: 100%; height: 100%; z-index: -1; }

/* Map */
.map { position: relative; width: 514px; height: 236px; overflow: hidden; font-family: Roboto, sans-serif; }
.map-art { width: 100%; height: 100%; }
.map-art text { paint-order: stroke; stroke: #f5f2ea; stroke-width: 2px; }
.place { fill: #4b453b; }
.area { fill: #8c7f60; font-style: italic; font-weight: 500; }
.park { fill: #3a7d34; font-size: 12px; font-style: italic; }
.shield { font-size: 9px; font-weight: 500; fill: #222; }
.map-type { position: absolute; top: -4px; left: 10px; display: flex; height: 29px; background: #fff; border-radius: 2px; box-shadow: 0 1px 3px #0004; font-size: 11px; color: #666; }
.map-type button { padding: 0 8px; }
.map-type .on { font-weight: 500; color: #000; border-right: 1px solid #e4e4e4; }
.map-tools { position: absolute; right: 10px; top: 119px; display: flex; flex-direction: column; gap: 10px; }
.map-tools button { width: 28px; height: 28px; }
.pegman, .zoom { background: #fff; border-radius: 2px; box-shadow: 0 1px 3px #0004; }
.zoom button + button { border-top: 1px solid #e4e4e4; height: 27px; }
.google { position: absolute; left: 6px; bottom: 2px; font: 500 20px/24px Roboto, sans-serif; text-shadow: 0 0 2px #fff; }
.google .b { color: #4285f4; }
.google .r { color: #ea4335; }
.google .y { color: #fbbc05; }
.google .g { color: #34a853; }
.map-legal { position: absolute; right: 0; bottom: 0; display: flex; background: #f5f5f5cc; color: #444; font-size: 10px; line-height: 14px; }
.map-legal > * { padding: 0 6px; }
.map-legal > * + * { border-left: 1px solid #ccc; }

/* Form */
.field-label { display: block; width: fit-content; line-height: 14px; padding: 6px 0 8px; }
.select-wrap { position: relative; width: 261px; height: 32px; }
.select-wrap::after { content: "▼"; position: absolute; right: 6px; top: 10px; font-size: 9px; }
select {
	width: 100%; height: 100%; padding: 0 4px; appearance: none; background: #fff;
	border: 1px solid #a9bac3; border-left-width: 4px; border-radius: 0; font: inherit; color: inherit;
}
.highlight { width: 393px; height: 325px; margin: 2px 0 0 -14px; padding: 0 9px; border: 5px solid #ed1c24; }
.highlight .field-label { padding: 5px 0 9px; }

.editor { width: 274px; border: 1px solid #999; border-radius: 2px; }
.toolbar {
	display: flex; flex-direction: column; gap: 2px; height: 133px; padding: 2px;
	background: linear-gradient(#fdfdfd, #ddd); border-bottom: 1px solid #999;
}
.row { display: flex; gap: 2px; }
.group {
	display: flex; flex: none; height: 24px; border: 1px solid #bdbdbd; border-bottom-color: #a5a5a5; border-radius: 3px;
	background: linear-gradient(#fff, #d9d9d9);
}
.ic { width: 26px; }
.caret { width: 15px; padding-right: 2px; }
.caret.narrow { width: 13px; padding-right: 4px; }
.caret::after, .tri { content: ""; border: 4px solid transparent; border-top-color: #333; border-bottom: 0; }
.letter { font: bold 13px/14px "Liberation Sans", sans-serif; flex-direction: column; }
.letter::after { content: ""; width: 16px; height: 2px; background: #888; }
.letter.shaded { background: linear-gradient(#b5b5b5, #b5b5b5) center / 16px 18px no-repeat; }
.big { font: bold 15px/20px Roboto, sans-serif; }
.big u { font-weight: 500; }
.serif { font: bold 17px/20px "Liberation Mono", monospace; }
.menu { width: 97px; padding: 0 8px 0 5px; justify-content: space-between; font: 12px/20px "Liberation Sans", sans-serif; }
.menu.short { width: 67px; padding-right: 5px; }
.spell { flex-direction: column; font: bold 8px/8px "Liberation Mono", monospace; }
textarea { display: block; width: 100%; height: 100px; border: 0; padding: 8px; resize: none; outline: 0; font: inherit; }
.statusbar {
	position: relative; display: flex; justify-content: space-between; padding: 0 8px 0 10px;
	border-top: 1px solid #999; background: linear-gradient(#fdfdfd, #ddd);
	font: 14px/36px "Liberation Sans", sans-serif; color: #555;
}
.grip { position: absolute; right: 2px; bottom: 1px; }

hr { margin: 12px 0 20px; border: 0; border-top: 1px solid #8b0000; }
.actions { display: flex; gap: 10px; }
.actions button { height: 30px; padding: 0 15px; border: 1px solid #c4c4c4; background: #ececec; color: #428fb8; font-size: 12px; font-weight: bold; }
.actions .primary { margin-right: -2px; background: #282828; border-color: #000; color: #fff; }
.footer { height: 61px; padding-top: 25px; border-top: 4px solid #8b0000; background: #000; color: #fff; line-height: 14px; text-align: center; }

.scrollbar { display: flex; flex-direction: column; align-items: center; width: 17px; margin-top: -4px; padding: 7px 0; background: #f1f1f1; }
.scrollbar i { border: 4px solid transparent; }
.scrollbar .up { border-top: 0; border-bottom-color: #444; }
.scrollbar .down { border-bottom: 0; border-top-color: #999; }
.thumb { width: 13px; height: 248px; margin: auto 0 6px; background: #bcbcbc; border: 1px solid #a5a5a5; }

/* Taskbar */
.taskbar {
	display: flex; align-items: center; height: 40px; border-top: 1px solid #60696f; padding-left: 8px; color: #fff;
	background: linear-gradient(90deg, #080c0f 0, #171c22 490px, #1d242b 565px, #accdef 580px, #b9dcfd 650px, #acd0f2 720px, #b9dcfd 840px, #a9cdef 905px, #b4d8fa 1040px, #a5c8ea 1090px, #1b232d 1105px, #080b0f 1280px);
}
.tasks { display: flex; gap: 4px; margin-left: 14px; }
.task { width: 58px; height: 38px; border: 1px solid #888; border-radius: 3px; background: linear-gradient(#7d8184, #2c3033 50%, #191c1f); }
.task.stack { width: 52px; margin-right: 6px; box-shadow: 2px 0 0 #22272b, 3px 0 0 #777, 5px 0 0 #22272b, 6px 0 0 #666; }
.task.active { background: linear-gradient(135deg, #aaa, #8a8a8a 50%, #b5b5b5); border-color: #eee; }
.z { width: 32px; height: 32px; border-radius: 4px; background: #0a88c8; font: bold 25px/32px "Liberation Sans", sans-serif; }
.tray { margin-left: auto; border: 4px solid transparent; border-top: 0; border-bottom-color: #fff; }
.clock { margin: 0 10px 0 15px; font: 11px/17px "Noto Sans", "Segoe UI", sans-serif; text-align: center; }
.desktop { width: 14px; height: 38px; border: 1px solid #777; background: linear-gradient(#777, #1a1e22 40%); }
```
